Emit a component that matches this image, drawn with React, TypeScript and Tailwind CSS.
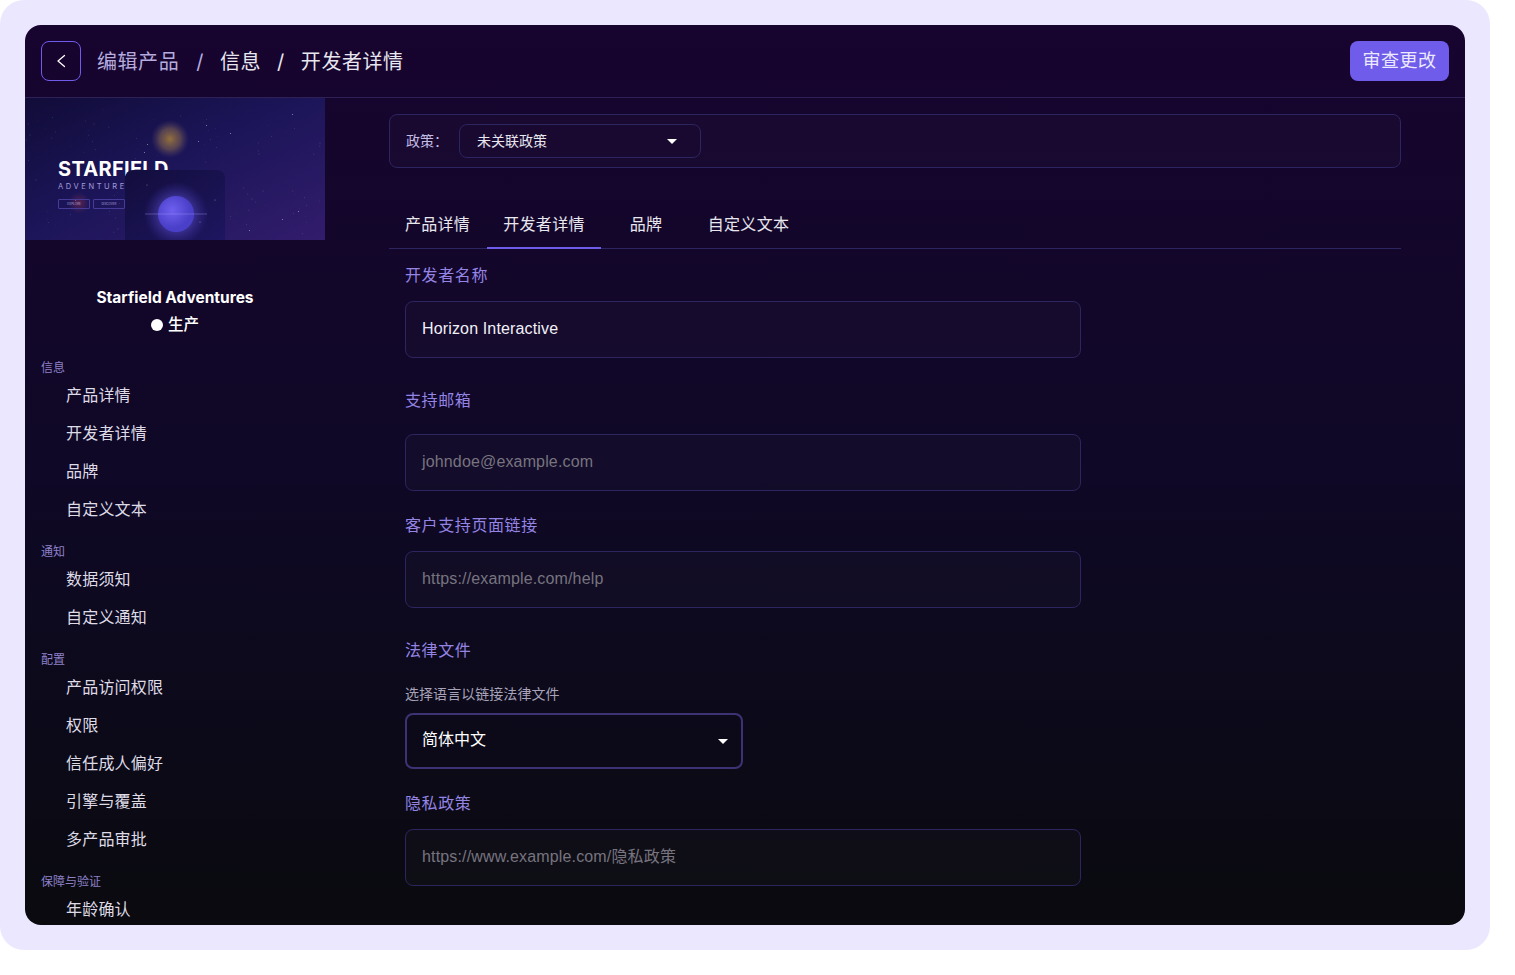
import React from 'react';

const sidebarGroups = [
  { title: '信息', items: ['产品详情', '开发者详情', '品牌', '自定义文本'] },
  { title: '通知', items: ['数据须知', '自定义通知'] },
  { title: '配置', items: ['产品访问权限', '权限', '信任成人偏好', '引擎与覆盖', '多产品审批'] },
  { title: '保障与验证', items: ['年龄确认'] },
];

const tabs = [
  { name: '产品详情', cls: 'w-[97px] mr-px pb-[2px]' },
  { name: '开发者详情', cls: 'w-[114px] mr-[13px] border-b-2 border-[#6f5ceb]' },
  { name: '品牌', cls: 'w-[64px] mr-[14px] pb-[2px]' },
  { name: '自定义文本', cls: 'w-[113px] pb-[2px]' },
];

const stars = Array.from({ length: 130 }, (_, i) => ({
  x: (i * 97.3 + ((i * i * 13) % 41)) % 300,
  y: (i * 53.7 + ((i * 7) % 29)) % 142,
  r: i % 5 === 0 ? 0.55 : 0.3,
  o: 0.2 + ((i * 3) % 6) / 10,
}));

const Caret = () => (
  <svg width="10" height="5" viewBox="0 0 10 5" className="shrink-0">
    <path d="M0 0H10L5 5Z" fill="#ffffff" />
  </svg>
);

const Hero = () => (
  <div className="relative h-[142px] w-[300px] overflow-hidden bg-[#1a1252]">
    <svg width="300" height="142" viewBox="0 0 300 142" className="absolute inset-0">
      <defs>
        <linearGradient id="sky" x1="0" y1="0" x2="1" y2="1">
          <stop offset="0" stopColor="#110c38" />
          <stop offset="0.45" stopColor="#1b1558" />
          <stop offset="1" stopColor="#321c6c" />
        </linearGradient>
        <radialGradient id="sun">
          <stop offset="0" stopColor="#94703c" />
          <stop offset="0.55" stopColor="#6a5250" stopOpacity="0.75" />
          <stop offset="1" stopColor="#4a3a60" stopOpacity="0" />
        </radialGradient>
        <radialGradient id="red">
          <stop offset="0" stopColor="#7a2848" stopOpacity="0.7" />
          <stop offset="1" stopColor="#5a2858" stopOpacity="0" />
        </radialGradient>
        <radialGradient id="halo">
          <stop offset="0.45" stopColor="#6a5ce8" stopOpacity="0.5" />
          <stop offset="1" stopColor="#4a3cc0" stopOpacity="0" />
        </radialGradient>
        <radialGradient id="ball" cx="0.4" cy="0.4">
          <stop offset="0" stopColor="#6f60f0" />
          <stop offset="1" stopColor="#4a3fc8" />
        </radialGradient>
        <linearGradient id="panel" x1="0" y1="0" x2="1" y2="1">
          <stop offset="0" stopColor="#120d3c" />
          <stop offset="1" stopColor="#1e1660" />
        </linearGradient>
      </defs>
      <rect width="300" height="142" fill="url(#sky)" />
      {stars.map((s, i) => (
        <circle key={i} cx={s.x} cy={s.y} r={s.r} fill="#ffffff" opacity={s.o} />
      ))}
      <circle cx="145" cy="41" r="19" fill="url(#sun)" />
      <circle cx="54" cy="105" r="11" fill="url(#red)" />
    </svg>
    <div className="absolute left-[33px] top-[59px] text-[20px] leading-[24px] font-bold tracking-[0.3px] text-white">STARFIELD</div>
    <div className="absolute left-[33px] top-[84px] text-[7.5px] leading-[10px] tracking-[2.6px] text-[#a49cd8]">ADVENTURES</div>
    <div className="absolute left-[33px] top-[101px] flex gap-[3px]">
      <span className="flex h-[10px] w-[32px] items-center justify-center rounded-[1px] border border-[#463c98] text-[3px] text-[#a49cd8]">EXPLORE</span>
      <span className="flex h-[10px] w-[32px] items-center justify-center rounded-[1px] border border-[#463c98] text-[3px] text-[#a49cd8]">DISCOVER</span>
    </div>
    <div className="absolute left-[100px] top-[72px] h-[70px] w-[100px] overflow-hidden rounded-t-lg">
      <svg width="100" height="70" viewBox="0 0 100 70">
        <rect width="100" height="70" fill="url(#panel)" />
        <circle cx="51" cy="44" r="32" fill="url(#halo)" />
        <circle cx="51" cy="44" r="18" fill="url(#ball)" />
        <path d="M20 44H82" stroke="#a89eff" strokeWidth="0.6" opacity="0.6" />
        <circle cx="22" cy="15" r="0.5" fill="#fff" opacity="0.5" />
        <circle cx="90" cy="30" r="0.5" fill="#fff" opacity="0.5" />
        <circle cx="75" cy="52" r="0.5" fill="#fff" opacity="0.5" />
      </svg>
    </div>
  </div>
);

const Sidebar = () => (
  <aside className="h-full w-[300px] shrink-0 overflow-hidden">
    <Hero />
    <div className="mt-[47px] text-center">
      <div className="text-[15.5px] leading-[22px] font-bold text-white">Starfield Adventures</div>
      <div className="mt-[5px] flex items-center justify-center gap-[5px] text-[15.5px] leading-[22px] font-medium text-white">
        <span className="h-3 w-3 rounded-full bg-white" />
        生产
      </div>
    </div>
    <nav className="mt-[23px]">
      {sidebarGroups.map((group) => (
        <div key={group.title} className="mb-[15px]">
          <div className="pl-4 text-xs leading-[17px] text-[#8d80c8]">{group.title}</div>
          <div className="flex flex-col">
            {group.items.map((item) => (
              <div key={item} className="flex h-[38px] items-center pl-[41px] text-base tracking-[0.2px] text-[#dedbe6]">{item}</div>
            ))}
          </div>
        </div>
      ))}
    </nav>
  </aside>
);

const Label = ({ text, cls }: { text: string; cls: string }) => (
  <div className={`text-base leading-6 tracking-[0.6px] text-[#9484e4] ${cls}`}>{text}</div>
);

const Field = ({ value, placeholder, cls }: { value?: string; placeholder?: string; cls: string }) => (
  <div className={`flex h-[57px] w-[676px] items-center rounded-lg border border-[#2d2560] bg-[#ffffff05] px-4 pb-px font-['Liberation_Sans','Noto_Sans_CJK_SC',sans-serif] text-base tracking-[0.15px] ${value ? 'text-[#f2f0f8]' : 'text-[#77747f]'} ${cls}`}>
    {value || placeholder}
  </div>
);

export default function App() {
  return (
    <div className="h-[975px] w-[1515px] overflow-hidden bg-white font-['Inter','Noto_Sans_CJK_SC',sans-serif]">
      <div className="h-[950px] w-[1490px] rounded-[24px] bg-[#ebe7ff] p-[25px]">
        <div className="flex h-[900px] w-[1440px] flex-col overflow-hidden rounded-2xl bg-gradient-to-b from-[#17042f] via-[#0f0826] via-50% to-[#0a0a0f]">
          <header className="flex h-[73px] shrink-0 items-center justify-between border-b border-[#2d2158] px-4">
            <div className="flex items-center">
              <button className="flex h-10 w-10 items-center justify-center rounded-lg border border-[#6f5ceb] text-white">
                <svg width="18" height="18" viewBox="0 0 18 18" fill="none" stroke="#ffffff" strokeWidth="1.3" strokeLinecap="round" strokeLinejoin="round">
                  <path d="M12.5 3.5L6 9L12.5 14.5" />
                </svg>
              </button>
              <div className="ml-4 flex items-center pt-px text-xl tracking-[0.55px]">
                <span className="text-[#b5acdf]">编辑产品</span>
                <span className="ml-[17px] text-[#b5acdf]">/</span>
                <span className="ml-[16px] text-[#e8e6ee]">信息</span>
                <span className="ml-[16px] text-[#e8e6ee]">/</span>
                <span className="ml-[16px] text-[#e8e6ee]">开发者详情</span>
              </div>
            </div>
            <button className="flex h-10 w-[99px] items-center justify-center rounded-lg bg-[#6f5ceb] text-lg tracking-[0.5px] text-[#ece9ff]">审查更改</button>
          </header>
          <div className="flex min-h-0 flex-1">
            <Sidebar />
            <main className="flex-1 pl-[64px] pr-[64px] pt-4">
              <div className="flex h-[54px] w-[1012px] items-center rounded-lg border border-[#2d2560] bg-[#ffffff05] pl-4">
                <span className="text-sm text-[#c4bde6]">政策：</span>
                <div className="ml-[11px] flex h-[34px] w-[242px] items-center justify-between rounded-lg border border-[#2d2560] pl-[17px] pr-[23px] text-sm text-[#e8e6ee]">
                  未关联政策
                  <Caret />
                </div>
              </div>
              <div className="mt-[33px] flex h-[48px] w-[1012px] border-b border-[#2d2560]">
                {tabs.map((tab) => (
                  <div key={tab.name} className={`flex h-[48px] items-center justify-center text-base tracking-[0.3px] text-[#e8e6ee] ${tab.cls}`}>{tab.name}</div>
                ))}
              </div>
              <div className="pl-4">
                <Label text="开发者名称" cls="mt-[14px]" />
                <Field value="Horizon Interactive" cls="mt-[14px]" />
                <Label text="支持邮箱" cls="mt-[30px]" />
                <Field placeholder="johndoe@example.com" cls="mt-[22px]" />
                <Label text="客户支持页面链接" cls="mt-[22px]" />
                <Field placeholder="https://example.com/help" cls="mt-[14px]" />
                <Label text="法律文件" cls="mt-[30px]" />
                <div className="mt-[22px] text-sm leading-5 tracking-[0.05px] text-[#a7a2b8]">选择语言以链接法律文件</div>
                <div className="mt-[9px] flex h-[56px] w-[338px] items-center justify-between rounded-lg border-2 border-[#3c3274] pb-[4px] pl-[15px] pr-[13px] text-base text-white">
                  简体中文
                  <span className="mt-[4px]"><Caret /></span>
                </div>
                <Label text="隐私政策" cls="mt-[22px]" />
                <Field placeholder="https://www.example.com/隐私政策" cls="mt-[14px]" />
              </div>
            </main>
          </div>
        </div>
      </div>
    </div>
  );
}
